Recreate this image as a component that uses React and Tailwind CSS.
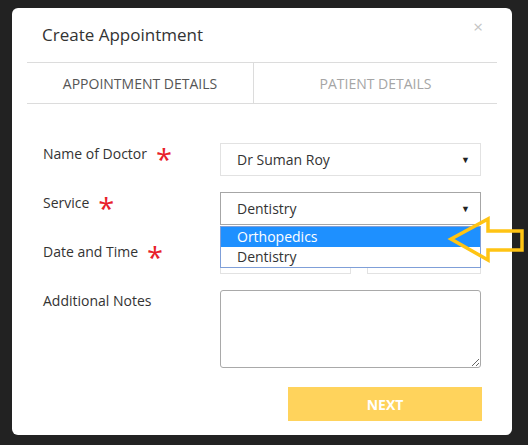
import React from "react";

const font = { fontFamily: '"Open Sans", "Liberation Sans", sans-serif' };

function Star() {
  return (
    <span className="ml-[9px] inline-block h-[20px] overflow-visible align-top text-[29px] leading-[20px] text-[#e8202a] translate-y-[5px]">
      *
    </span>
  );
}

function Label({ children, required }) {
  return (
    <div className="w-[177px] shrink-0 pt-[1px] text-[14px] leading-[20px] text-[#333]">
      {children}
      {required && <Star />}
    </div>
  );
}

function Caret() {
  return <span className="text-[9px] leading-none text-[#222]">▼</span>;
}

function ArrowPointer() {
  return (
    <svg
      className="absolute left-[446px] top-[214px] z-20"
      width="82"
      height="52"
      viewBox="0 0 82 52"
      fill="none"
    >
      <path
        d="M5 25 L42 5 L42 17 L76 17 L76 36 L42 36 L42 46 Z"
        stroke="#ffc413"
        strokeWidth="3.5"
        strokeLinejoin="miter"
      />
    </svg>
  );
}

export default function App() {
  return (
    <div className="relative h-[445px] w-[528px] overflow-hidden bg-[#222]" style={font}>
      <div className="relative pl-[12px] pt-[8px]">
        <div className="relative h-[427px] w-[500px] rounded-[6px] bg-white">
          {/* header */}
          <div className="flex h-[54px] items-start justify-between pl-[30px] pr-[29px] pt-[15px]">
            <h1 className="text-[17px] leading-[24px] text-[#333]">Create Appointment</h1>
            <span className="-mt-[6px] text-[17px] leading-[20px] text-[#c4c4c4]">×</span>
          </div>

          {/* tabs */}
          <div className="mx-[15px] flex h-[42px] border-y border-[#dcdcdc]">
            <div className="flex w-[227px] items-center justify-center border-r border-[#dcdcdc] text-[14px] uppercase text-[#555]">
              Appointment Details
            </div>
            <div className="flex flex-1 items-center justify-center text-[14px] uppercase text-[#a5a5a5]">
              Patient Details
            </div>
          </div>

          {/* form */}
          <div className="mt-[39px] flex flex-col gap-[16px] pl-[31px] pr-[31px]">
            <div className="flex items-start">
              <Label required>Name of Doctor</Label>
              <div className="flex h-[33px] w-[261px] items-center justify-between border border-[#e2e2e2] pl-[16px] pr-[10px] text-[14px] text-[#333]">
                <span>Dr Suman Roy</span>
                <Caret />
              </div>
            </div>

            <div className="relative z-10 flex items-start">
              <Label required>Service</Label>
              <div className="relative">
                <div className="flex h-[33px] w-[261px] items-center justify-between border border-[#a6a6a6] pl-[16px] pr-[10px] text-[14px] text-[#333]">
                  <span>Dentistry</span>
                  <Caret />
                </div>
                <ul className="absolute left-0 top-[34px] w-[261px] border border-[#7f9fd8] bg-white text-[14px] leading-[20px]">
                  <li className="bg-[#1e90ff] pl-[16px] text-white">Orthopedics</li>
                  <li className="pl-[16px] text-[#333]">Dentistry</li>
                </ul>
              </div>
            </div>

            <div className="flex items-start">
              <Label required>Date and Time</Label>
              <div className="flex w-[261px] gap-[16px]">
                <div className="h-[33px] w-[131px] border border-[#e2e2e2]" />
                <div className="h-[33px] flex-1 border border-[#e2e2e2]" />
              </div>
            </div>

            <div className="flex items-start">
              <Label>Additional Notes</Label>
              <textarea className="h-[78px] w-[262px] rounded-[3px] border border-[#a9a9a9] outline-none" />
            </div>
          </div>

          <div className="mt-[19px] flex justify-end pr-[30px]">
            <button className="h-[34px] w-[194px] bg-[#ffd35c] text-[14px] font-bold text-white">
              NEXT
            </button>
          </div>
        </div>
      </div>

      <ArrowPointer />
    </div>
  );
}
